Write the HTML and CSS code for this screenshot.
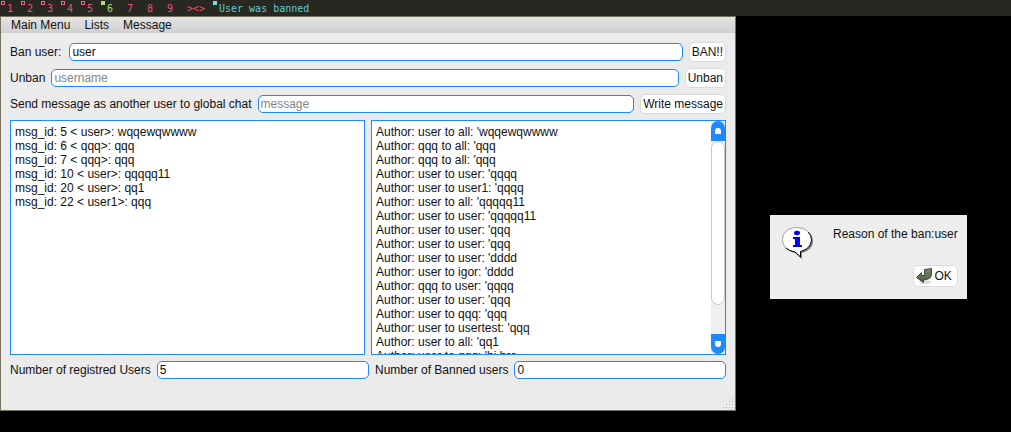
FILE: index.html
```html
<!DOCTYPE html>
<html lang="en">
<head>
<meta charset="utf-8">
<title>User was banned</title>
<link rel="stylesheet" href="styles.css">
</head>
<body>
<header class="bar">
  <nav class="tags">
    <span class="tag open">1</span><span class="tag open">2</span><span class="tag open">3</span><span class="tag open">4</span><span class="tag open">5</span><span class="tag current">6</span><span class="tag">7</span><span class="tag">8</span><span class="tag">9</span>
  </nav>
  <span class="layout">&gt;&lt;&gt;</span>
  <span class="title">User was banned</span>
</header>
<div class="desktop">
  <main class="window">
    <nav class="menubar">
      <button class="menu">Main Menu</button>
      <button class="menu">Lists</button>
      <button class="menu">Message</button>
    </nav>
    <div class="content">
      <div class="row">
        <label class="label wide" for="ban">Ban user:</label>
        <input class="field" id="ban" type="text" value="user">
        <button class="button">BAN!!</button>
      </div>
      <div class="row">
        <label class="label" for="unban">Unban</label>
        <input class="field" id="unban" type="text" placeholder="username">
        <button class="button">Unban</button>
      </div>
      <div class="row">
        <label class="label" for="send">Send message as another user to global chat</label>
        <input class="field" id="send" type="text" placeholder="message">
        <button class="button">Write message</button>
      </div>
      <div class="lists">
        <ul class="list">
          <li>msg_id: 5 &lt; user&gt;: wqqewqwwww</li>
          <li>msg_id: 6 &lt; qqq&gt;: qqq</li>
          <li>msg_id: 7 &lt; qqq&gt;: qqq</li>
          <li>msg_id: 10 &lt; user&gt;: qqqqq11</li>
          <li>msg_id: 20 &lt; user&gt;: qq1</li>
          <li>msg_id: 22 &lt; user1&gt;: qqq</li>
        </ul>
        <div class="scrolled">
          <ul class="lines">
            <li>Author: user to all: 'wqqewqwwww</li>
            <li>Author: qqq to all: 'qqq</li>
            <li>Author: qqq to all: 'qqq</li>
            <li>Author: user to user: 'qqqq</li>
            <li>Author: user to user1: 'qqqq</li>
            <li>Author: user to all: 'qqqqq11</li>
            <li>Author: user to user: 'qqqqq11</li>
            <li>Author: user to user: 'qqq</li>
            <li>Author: user to user: 'qqq</li>
            <li>Author: user to user: 'dddd</li>
            <li>Author: user to igor: 'dddd</li>
            <li>Author: qqq to user: 'qqqq</li>
            <li>Author: user to user: 'qqq</li>
            <li>Author: user to qqq: 'qqq</li>
            <li>Author: user to usertest: 'qqq</li>
            <li>Author: user to all: 'qq1</li>
            <li>Author: user to qqq: 'hi bro</li>
          </ul>
          <div class="scrollbar">
            <button class="arrow up" aria-label="Scroll up"><svg width="6" height="6" viewBox="0 0 6 6"><path d="M0 6V3Q0 0 3 0T6 3V6Z" fill="#fff"/></svg></button>
            <div class="track"><div class="thumb"></div></div>
            <button class="arrow down" aria-label="Scroll down"><svg width="6" height="6" viewBox="0 0 6 6"><path d="M0 0V3Q0 6 3 6T6 3V0Z" fill="#fff"/></svg></button>
          </div>
        </div>
      </div>
      <div class="counts">
        <div class="row">
          <label class="label" for="registered">Number of registred Users</label>
          <input class="field" id="registered" type="text" value="5">
        </div>
        <div class="row">
          <label class="label" for="banned">Number of Banned users</label>
          <input class="field" id="banned" type="text" value="0">
        </div>
      </div>
    </div>
    <svg class="grip" width="11" height="11" viewBox="0 0 11 11" fill="#b4b4b4"><path d="M9 0h1v1h-1zM9 3h1v1h-1zM6 3h1v1h-1zM9 6h1v1h-1zM6 6h1v1h-1zM3 6h1v1h-1zM9 9h1v1h-1zM6 9h1v1h-1zM3 9h1v1h-1zM0 9h1v1h-1z"/></svg>
  </main>
  <section class="dialog" role="dialog" aria-label="Reason of the ban">
    <svg class="info" width="34" height="34" viewBox="0 0 34 34">
      <path d="M17 3C26 3 32 8 32 15C32 21 28 25 21 27V33L14 27C7 25 3 21 3 15C3 8 9 3 17 3Z" fill="#858585"/>
      <path d="M15.500 1.500C24 1.500 30.500 6.500 30.500 13.500C30.500 19.500 26 24 19.500 25.500V31L14 26C6 25 1.500 20 1.500 13.500C1.500 6.500 7.500 1.500 15.500 1.500Z" fill="#fff" stroke="#a0a0a0"/>
      <path d="M27 6Q30.500 9 30.500 13.500C30.500 19.500 26 24 19.500 25.500V31L14 26Q8 25 5 22" fill="none" stroke="#000"/>
      <ellipse cx="16" cy="7" rx="3" ry="2.200" fill="#00f"/>
      <path d="M12 11h7v8h2v2h-9v-2h2v-6h-2z" fill="#00f"/>
    </svg>
    <p class="message">Reason of the ban:user</p>
    <button class="button ok">
      <svg width="16" height="16" viewBox="0 0 16 16"><defs><linearGradient id="leaf" x2="0" y2="1"><stop stop-color="#77886a"/><stop offset="1" stop-color="#4c5c40"/></linearGradient></defs><ellipse cx="9" cy="14" rx="6" ry="2" fill="#ddd"/><path d="M8.500 1.500L15.500.500V7Q15 10 12 11L7.500 12V14.500L.500 9.500L5.500 4.500V7.500H8.500Z" fill="url(#leaf)" stroke="#414b38"/></svg>
      OK
    </button>
  </section>
</div>
</body>
</html>
```
FILE: styles.css
```css
*, ::before { box-sizing: border-box; }
body {
  margin: 0;
  min-height: 100vh;
  background: #000;
  color: #111;
  font: 12px/14px "Liberation Sans", Arial, sans-serif;
}
button, input { font: inherit; color: inherit; margin: 0; }
ul { list-style: none; margin: 0; padding: 0; }

.bar {
  display: flex;
  height: 16px;
  background: #272822;
  color: #e8527a;
  font: 10px/18px "DejaVu Sans Mono", monospace;
}
.tags { display: flex; }
.tag { position: relative; width: 20px; padding-left: 7px; }
.layout { width: 33px; padding-left: 7px; }
.title { position: relative; padding-left: 6px; color: #66c9d9; }
.current { color: #a9dc76; }
.open::before, .current::before, .title::before {
  content: "";
  position: absolute;
  left: 1px;
  top: 1px;
  width: 4px;
  height: 4px;
}
.title::before { left: 0; background: #78dce8; }
.current::before { background: #a9dc76; }
.open::before { border: 1px solid #ff6188; }

.desktop { position: relative; }
.window {
  position: relative;
  width: 72.8%;
  padding-bottom: 31px;
  border: 1px solid #75715e;
  background: #ebebeb;
}
.menubar {
  display: flex;
  gap: 14px;
  padding: 0 10px;
  height: 16px;
  background: linear-gradient(#e4e4e4, #cfcfcf);
}
.menu { padding: 0; border: 0; background: none; }

.content {
  display: flex;
  flex-direction: column;
  gap: 6px;
  padding: 9px 9px 0;
}
.row { display: flex; align-items: center; gap: 6px; }
.label { white-space: nowrap; }
.wide { padding-right: 2px; }
.field {
  flex: 1;
  min-width: 0;
  height: 18px;
  padding: 0 2px;
  border: 1px solid #1e88ff;
  border-radius: 5px;
  background: #fff;
}
.field::placeholder { color: #858585; }
.button {
  display: flex;
  align-items: center;
  justify-content: center;
  height: 20px;
  padding: 0 2px;
  border: 1px solid #dadada;
  border-radius: 5px;
  background: #fff;
}

.lists, .counts { display: grid; grid-template-columns: 1fr 1fr; gap: 6px; }
.list, .scrolled {
  height: 235px;
  border: 1px solid #1e88ff;
  background: #fff;
}
.list, .lines { padding: 4px; }
.scrolled { display: flex; overflow: hidden; }
.lines { flex: 1; }
.scrollbar {
  display: flex;
  flex-direction: column;
  width: 14px;
  background: #f0f0f0;
}
.arrow {
  display: flex;
  align-items: center;
  justify-content: center;
  height: 20px;
  padding: 0;
  border: 0;
  background: #1e88ff;
}
.up { border-radius: 7px 7px 0 0; }
.down { border-radius: 0 0 7px 7px; }
.track { flex: 1; }
.thumb {
  height: 85%;
  border: 1px solid #c8c8c8;
  border-radius: 7px;
  background: #fff;
}
.counts { grid-template-columns: 359fr 351fr; }
.grip { position: absolute; right: 1px; bottom: 1px; }

.dialog {
  position: absolute;
  left: 770px;
  top: 199px;
  display: grid;
  grid-template-columns: 34px auto;
  column-gap: 18px;
  row-gap: 5px;
  padding: 11px 9px 12px 11px;
  background: #eee;
}
.message { margin: 1px 0 0; }
.ok { grid-column: 2; justify-self: end; gap: 2px; height: 22px; padding: 0 5px 0 2px; }
```
